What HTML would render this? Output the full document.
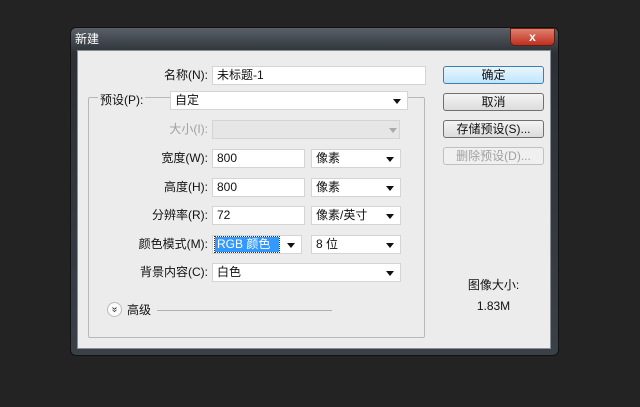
<!DOCTYPE html>
<html><head><meta charset="utf-8"><style>
*{margin:0;padding:0;box-sizing:border-box}
body{width:640px;height:407px;background:#232323;position:relative;overflow:hidden;font-family:"Liberation Sans","Noto Sans CJK SC",sans-serif;font-size:12px;color:#111}
.a{position:absolute;white-space:nowrap}
.win{left:70px;top:27px;width:489px;height:329px;border-radius:6px;background:linear-gradient(#5a6068,#2c3036 25px,#3a4048);border:1px solid #111}
.client{left:77px;top:50px;width:474px;height:299px;background:#ececec;border:1px solid #8a8e94}
.grp{left:88px;top:97px;width:337px;height:241px;border:1px solid #b8b8b8;border-radius:2px}
.lbl{text-align:right;width:130px;line-height:18px}
.f{background:#fff;border:1px solid #d4d4d4;height:19px;line-height:17px;padding-left:4px}
.arr:after{content:"";position:absolute;right:6px;top:7px;border-left:4px solid transparent;border-right:4px solid transparent;border-top:5px solid #111}
.btn{left:443px;width:101px;height:18px;border:1px solid #707070;border-radius:3px;background:linear-gradient(#f4f4f4,#dcdcdc);text-align:center;line-height:16px}
</style></head><body>
<div class="a win"></div>
<div class="a" style="left:75px;top:30px;color:#fff;font-size:12px">新建</div>
<div class="a" style="left:510px;top:28px;width:45px;height:18px;border-radius:0 0 5px 5px;background:linear-gradient(#e08070,#c03020);border:1px solid #602010;color:#fff;text-align:center;font-weight:bold;line-height:16px">x</div>
<div class="a client"></div>
<div class="a grp"></div>

<div class="a lbl" style="left:78px;top:66px">名称(N):</div>
<div class="a f" style="left:212px;top:66px;width:214px">未标题-1</div>

<div class="a" style="left:98px;top:91px;background:#ececec;padding:0 2px;line-height:18px">预设(P):</div>
<div class="a f arr" style="left:170px;top:91px;width:238px">自定</div>

<div class="a lbl" style="left:78px;top:120px;color:#a0a0a0">大小(I):</div>
<div class="a f" style="left:212px;top:120px;width:188px;background:#e6e6e6"></div>
<div class="a" style="left:389px;top:128px;border-left:4px solid transparent;border-right:4px solid transparent;border-top:5px solid #aaa"></div>

<div class="a lbl" style="left:78px;top:149px">宽度(W):</div>
<div class="a f" style="left:212px;top:149px;width:93px">800</div>
<div class="a f arr" style="left:311px;top:149px;width:90px">像素</div>

<div class="a lbl" style="left:78px;top:178px">高度(H):</div>
<div class="a f" style="left:212px;top:178px;width:93px">800</div>
<div class="a f arr" style="left:311px;top:178px;width:90px">像素</div>

<div class="a lbl" style="left:78px;top:206px">分辨率(R):</div>
<div class="a f" style="left:212px;top:206px;width:93px">72</div>
<div class="a f arr" style="left:311px;top:206px;width:90px">像素/英寸</div>

<div class="a lbl" style="left:78px;top:235px">颜色模式(M):</div>
<div class="a f arr" style="left:212px;top:235px;width:90px"></div>
<div class="a" style="left:215px;top:237px;width:64px;height:15px;background:#3399ff;color:#fff;line-height:15px;padding-left:2px;outline:1px dotted #333">RGB 颜色</div>
<div class="a f arr" style="left:311px;top:235px;width:90px">8 位</div>

<div class="a lbl" style="left:78px;top:263px">背景内容(C):</div>
<div class="a f arr" style="left:212px;top:263px;width:189px">白色</div>

<div class="a" style="left:107px;top:302px;width:15px;height:15px;border-radius:50%;background:#fafafa;border:1px solid #bbb;font-size:10px;text-align:center;line-height:13px;transform:rotate(90deg)">»</div>
<div class="a" style="left:127px;top:302px;line-height:16px">高级</div>
<div class="a" style="left:157px;top:310px;width:175px;border-top:1px solid #b0b0b0"></div>

<div class="a btn" style="top:66px;border-color:#3c7fb1;background:linear-gradient(#eaf6fd,#bee6fd)">确定</div>
<div class="a btn" style="top:93px">取消</div>
<div class="a btn" style="top:120px">存储预设(S)...</div>
<div class="a btn" style="top:147px;color:#a0a0a0;border-color:#c0c0c0;background:#f0f0f0">删除预设(D)...</div>

<div class="a" style="left:443px;top:276px;width:101px;text-align:center">图像大小:</div>
<div class="a" style="left:443px;top:299px;width:101px;text-align:center">1.83M</div>
</body></html>
